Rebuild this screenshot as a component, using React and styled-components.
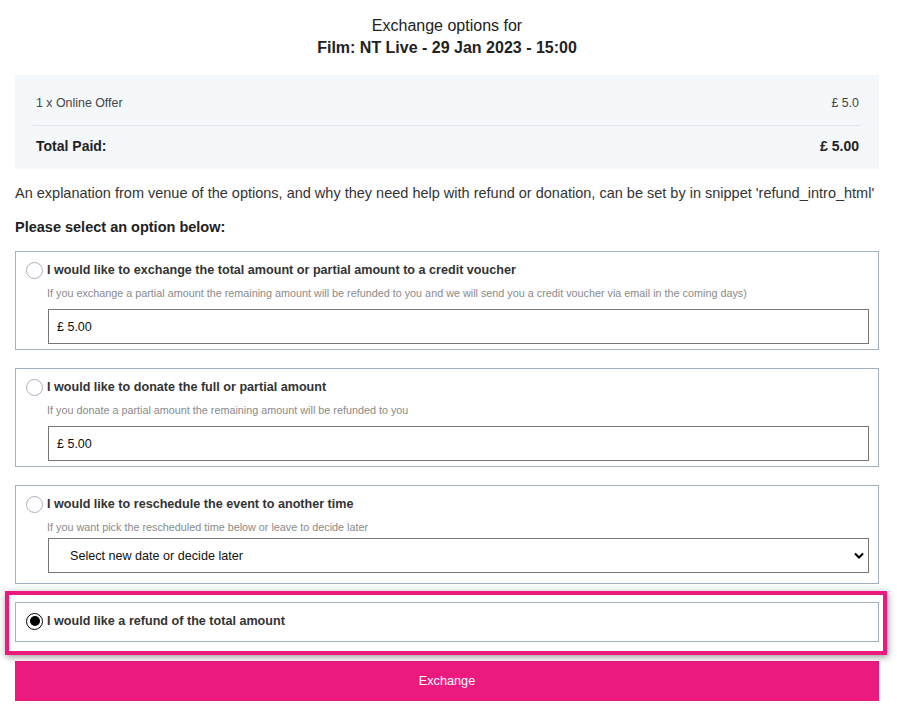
import React from "react";
import styled, { createGlobalStyle } from "styled-components";

const GlobalStyle = createGlobalStyle`
  html, body {
    margin: 0;
    padding: 0;
    background: #ffffff;
  }
  body {
    font-family: "Liberation Sans", Arial, sans-serif;
    color: #333333;
  }
  * { box-sizing: border-box; }
`;

const Page = styled.div`
  width: 864px;
  margin-left: 15px;
  padding-top: 15px;
  padding-bottom: 19px;
`;

const Heading = styled.header`
  text-align: center;
  font-size: 16px;
  line-height: 22px;
  color: #222222;
`;

const HeadingTitle = styled.div`
  font-weight: bold;
`;

const Summary = styled.section`
  margin-top: 16px;
  background: #f5f8fb;
  padding: 18px 18px 13px;
`;

const SummaryRow = styled.div`
  display: flex;
  justify-content: space-between;
  align-items: center;
  padding: 0 2px 0 3px;
  line-height: 20px;
  font-size: ${(p) => (p.$total ? "14px" : "12.4px")};
  font-weight: ${(p) => (p.$total ? "bold" : "normal")};
  color: ${(p) => (p.$total ? "#222222" : "#444444")};
`;

const Divider = styled.hr`
  border: 0;
  border-top: 1px solid #e1e5ea;
  margin: 12px 0 10px;
`;

const Intro = styled.p`
  margin: 14px 0 0;
  font-size: 14.5px;
  line-height: 20px;
  color: #333333;
`;

const Prompt = styled.p`
  margin: 14px 0 0;
  font-size: 14.5px;
  line-height: 20px;
  font-weight: bold;
  color: #222222;
`;

const Options = styled.div`
  margin-top: 14px;
  display: flex;
  flex-direction: column;
  gap: 18px;
`;

const Highlight = styled.div`
  margin: -11px -8px 0 -10px;
  border: 4px solid #ec1a7f;
  padding: 7px 4px 9px 6px;
  box-shadow: 1px 2px 7px rgba(0, 0, 0, 0.4);
`;

const Card = styled.label`
  display: grid;
  grid-template-columns: 17px 1fr;
  column-gap: 4px;
  align-items: center;
  border: 1px solid #a3b0c2;
  background: #ffffff;
  padding: ${(p) => (p.$compact ? "8px 9px 10px 10px" : "8px 9px 5px 10px")};
`;

const Radio = styled.span`
  width: 17px;
  height: 17px;
  border-radius: 50%;
  border: ${(p) => (p.$checked ? "1.5px solid #000000" : "1px solid #a8b3c2")};
  background: #ffffff;
  display: flex;
  align-items: center;
  justify-content: center;

  &::after {
    content: "";
    width: 10px;
    height: 10px;
    border-radius: 50%;
    background: #000000;
    display: ${(p) => (p.$checked ? "block" : "none")};
  }
`;

const OptionTitle = styled.span`
  font-size: 12.6px;
  line-height: 20px;
  font-weight: bold;
  color: #333333;
`;

const OptionHint = styled.span`
  grid-column: 2;
  margin-top: 5px;
  font-size: 10.8px;
  line-height: 16px;
  color: #8a8a8a;
`;

const AmountInput = styled.input`
  grid-column: 2;
  margin: 8px 0 0 1px;
  height: 35px;
  border: 1px solid #767676;
  padding: 0 8px;
  font-family: "Liberation Sans", Arial, sans-serif;
  font-size: 12.5px;
  color: #111111;
  background: #ffffff;
  outline: none;
`;

const SelectWrap = styled.div`
  grid-column: 2;
  position: relative;
  display: flex;
  margin: 3px 0 0 1px;
`;

const DateSelect = styled.select`
  appearance: none;
  flex: 1;
  height: 35px;
  border: 1px solid #767676;
  border-radius: 0;
  padding: 0 30px 0 21px;
  font-family: "Liberation Sans", Arial, sans-serif;
  font-size: 12.6px;
  color: #111111;
  background: #ffffff;
`;

const Chevron = styled.svg`
  position: absolute;
  right: 5px;
  top: 14px;
  width: 10px;
  height: 8px;
  pointer-events: none;
`;

const SubmitButton = styled.button`
  display: block;
  width: 100%;
  height: 40px;
  margin-top: 6px;
  border: 0;
  background: #ec1a7f;
  color: #ffffff;
  font-family: "Liberation Sans", Arial, sans-serif;
  font-size: 12.7px;
`;

function AmountOption({ title, hint }) {
  return (
    <Card>
      <Radio />
      <OptionTitle>{title}</OptionTitle>
      <OptionHint>{hint}</OptionHint>
      <AmountInput defaultValue="£ 5.00" />
    </Card>
  );
}

export default function App() {
  return (
    <>
      <GlobalStyle />
      <Page>
        <Heading>
          <div>Exchange options for</div>
          <HeadingTitle>Film: NT Live - 29 Jan 2023 - 15:00</HeadingTitle>
        </Heading>

        <Summary>
          <SummaryRow>
            <span>1 x Online Offer</span>
            <span>£ 5.0</span>
          </SummaryRow>
          <Divider />
          <SummaryRow $total>
            <span>Total Paid:</span>
            <span>£ 5.00</span>
          </SummaryRow>
        </Summary>

        <Intro>
          An explanation from venue of the options, and why they need help with refund or donation, can be set by in snippet 'refund_intro_html'
        </Intro>
        <Prompt>Please select an option below:</Prompt>

        <Options>
          <AmountOption
            title="I would like to exchange the total amount or partial amount to a credit voucher"
            hint="If you exchange a partial amount the remaining amount will be refunded to you and we will send you a credit voucher via email in the coming days)"
          />
          <AmountOption
            title="I would like to donate the full or partial amount"
            hint="If you donate a partial amount the remaining amount will be refunded to you"
          />
          <Card $compact>
            <Radio />
            <OptionTitle>I would like to reschedule the event to another time</OptionTitle>
            <OptionHint>If you want pick the rescheduled time below or leave to decide later</OptionHint>
            <SelectWrap>
              <DateSelect defaultValue="">
                <option value="">Select new date or decide later</option>
              </DateSelect>
              <Chevron viewBox="0 0 10 8">
                <path d="M1 1.5 L5 5.5 L9 1.5" fill="none" stroke="#000" strokeWidth="2" />
              </Chevron>
            </SelectWrap>
          </Card>
          <Highlight>
            <Card $compact>
              <Radio $checked />
              <OptionTitle>I would like a refund of the total amount</OptionTitle>
            </Card>
          </Highlight>
        </Options>

        <SubmitButton type="button">Exchange</SubmitButton>
      </Page>
    </>
  );
}
